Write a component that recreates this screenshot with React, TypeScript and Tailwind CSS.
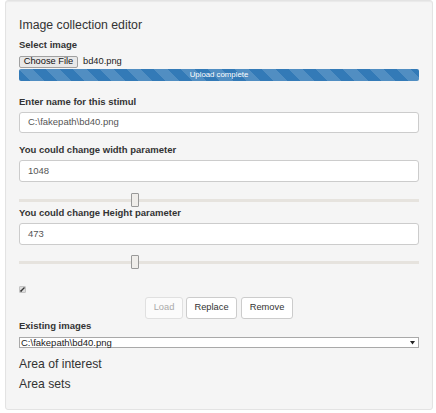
export default function App() {
  return (
    <div className="w-[436px] h-[413px] bg-white font-['Liberation_Sans',Arial,sans-serif] text-[#333]">
      {/* Panel */}
      <div className="ml-[5px] w-[428px] h-[410px] border border-[#e3e3e3] rounded-[3px] bg-[#f5f5f5] px-[13px] pt-[14px] shadow-[inset_0_1px_1px_rgba(0,0,0,0.05)]">
        <div className="h-[20px] leading-[20px] text-[12.3px]">Image collection editor</div>

        {/* Select image */}
        <div className="mt-[4px] h-[12px] leading-[12px] text-[9.5px] font-bold">Select image</div>
        <div className="mt-[5px] h-[12px] flex items-center">
          <div className="h-[12px] w-[59px] flex items-center justify-center border border-[#a0a0a0] rounded-[2px] bg-[#e8e8e8] text-[9.3px] text-[#111] leading-none">
            Choose File
          </div>
          <span className="ml-[5px] text-[9.3px] leading-none text-[#222]">bd40.png</span>
        </div>
        <div className="mt-[1px] h-[12px] rounded-[2px] bg-[#337ab7] bg-[linear-gradient(45deg,rgba(255,255,255,.15)_25%,transparent_25%,transparent_50%,rgba(255,255,255,.15)_50%,rgba(255,255,255,.15)_75%,transparent_75%,transparent)] bg-[length:27px_27px] flex items-center justify-center text-white text-[7.8px] leading-none">
          Upload complete
        </div>

        {/* Name */}
        <div className="mt-[15px] h-[12px] leading-[12px] text-[9.5px] font-bold">Enter name for this stimul</div>
        <div className="mt-[4px] h-[21px] border border-[#ccc] rounded-[3px] bg-white pl-[8px] flex items-center text-[9.5px] text-[#555]">
          C:\fakepath\bd40.png
        </div>

        {/* Width */}
        <div className="mt-[11px] h-[12px] leading-[12px] text-[9.5px] font-bold">You could change width parameter</div>
        <div className="mt-[4px] h-[22px] border border-[#ccc] rounded-[3px] bg-white pl-[8px] flex items-center text-[9.5px] text-[#555]">
          1048
        </div>
        <div className="relative mt-[11px] h-[14px] flex items-center">
          <div className="w-full h-[3px] bg-[#e6e3de]" />
          <div className="absolute left-[112px] top-0 w-[8px] h-[14px] border border-[#999] rounded-[1px] bg-[#efedea]" />
        </div>

        {/* Height */}
        <div className="h-[12px] leading-[12px] text-[9.5px] font-bold">You could change Height parameter</div>
        <div className="mt-[4px] h-[22px] border border-[#ccc] rounded-[3px] bg-white pl-[8px] flex items-center text-[9.5px] text-[#555]">
          473
        </div>
        <div className="relative mt-[10px] h-[14px] flex items-center">
          <div className="w-full h-[3px] bg-[#e6e3de]" />
          <div className="absolute left-[112px] top-0 w-[8px] h-[14px] border border-[#999] rounded-[1px] bg-[#efedea]" />
        </div>

        {/* Checkbox */}
        <div className="mt-[17px] w-[7px] h-[7px] rounded-[1px] bg-[#dcdcdc] border border-[#c4c4c4] flex items-center justify-center">
          <svg width="5" height="5" viewBox="0 0 5 5">
            <path d="M0.5 4.5 L4.5 0.5" stroke="#333" strokeWidth="1.3" />
            <path d="M0.8 3.2 L1.8 4.2" stroke="#333" strokeWidth="1.3" />
          </svg>
        </div>

        {/* Buttons */}
        <div className="mt-[4px] h-[22px] flex justify-center">
          <div className="w-[38px] h-[22px] flex items-center justify-center border border-[#e0e0e0] rounded-[3px] bg-[#fbfbfb] text-[9.3px] text-[#aaa]">Load</div>
          <div className="ml-[3px] w-[51px] h-[22px] flex items-center justify-center border border-[#ccc] rounded-[3px] bg-white text-[9.3px] text-[#333]">Replace</div>
          <div className="ml-[4px] w-[52px] h-[22px] flex items-center justify-center border border-[#ccc] rounded-[3px] bg-white text-[9.3px] text-[#333]">Remove</div>
        </div>

        {/* Existing */}
        <div className="mt-[1px] h-[12px] leading-[12px] text-[9.5px] font-bold">Existing images</div>
        <div className="mt-[5px] h-[11px] border border-[#a9a9a9] bg-white flex items-center justify-between pl-[1px] pr-[3px]">
          <span className="text-[9.5px] leading-none text-[#222]">C:\fakepath\bd40.png</span>
          <svg width="5" height="5" viewBox="0 0 5 5">
            <path d="M0 1 H5 L2.5 4.5 Z" fill="#222" />
          </svg>
        </div>

        <div className="mt-[8px] h-[16px] leading-[16px] text-[12.2px]">Area of interest</div>
        <div className="mt-[4px] h-[16px] leading-[16px] text-[12.2px]">Area sets</div>
      </div>
    </div>
  );
}
